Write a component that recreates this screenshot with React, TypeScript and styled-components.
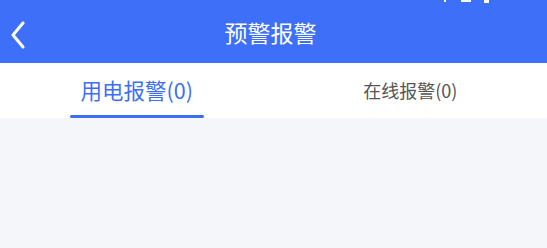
import React, { useState } from 'react';
import styled, { createGlobalStyle } from 'styled-components';

const GlobalStyle = createGlobalStyle`
  html, body {
    margin: 0;
    padding: 0;
    background: #f5f6fa;
    font-family: "Noto Sans CJK SC", "Noto Sans", sans-serif;
  }
`;

const tabs = ['用电报警(0)', '在线报警(0)'];

const App = () => {
  const [active, setActive] = useState(0);

  return (
    <Page>
      <GlobalStyle />
      <Header>
        <StatusIcons width="60" height="4" viewBox="0 0 60 4">
          <rect x="1" y="0" width="2" height="2" fill="#fff" />
          <rect x="18" y="0" width="10" height="2" fill="#fff" />
          <rect x="41" y="0" width="5" height="3" fill="#fff" />
        </StatusIcons>
        <BackButton>
          <svg width="16" height="28" viewBox="0 0 16 28">
            <path d="M13 2 L3 14 L13 26" fill="none" stroke="#fff" strokeWidth="3" strokeLinecap="round" strokeLinejoin="round" />
          </svg>
        </BackButton>
        <Title>预警报警</Title>
      </Header>
      <TabBar>
        {tabs.map((t, i) => (
          <Tab key={t} $active={i === active} onClick={() => setActive(i)}>
            {t}
          </Tab>
        ))}
      </TabBar>
      <Body />
    </Page>
  );
};

const Page = styled.div`
  width: 547px;
  height: 248px;
  display: flex;
  flex-direction: column;
  background: #f5f6fa;
  overflow: hidden;
`;

const Header = styled.div`
  position: relative;
  height: 63px;
  flex-shrink: 0;
  background: #3d6ff9;
  display: flex;
  align-items: center;
  justify-content: center;
`;

const StatusIcons = styled.svg`
  position: absolute;
  top: 0;
  right: 44px;
`;

const BackButton = styled.div`
  position: absolute;
  left: 10px;
  top: 21px;
  display: flex;
`;

const Title = styled.div`
  color: #fff;
  font-size: 23px;
  line-height: 30px;
  margin-right: 6px;
`;

const TabBar = styled.div`
  height: 55px;
  flex-shrink: 0;
  background: #fff;
  display: flex;
`;

const Tab = styled.div<{ $active: boolean }>`
  flex: 1;
  position: relative;
  display: flex;
  align-items: center;
  justify-content: center;
  padding-bottom: 2px;
  font-size: ${(p) => (p.$active ? '21.5px' : '18px')};
  color: ${(p) => (p.$active ? '#3d6ff6' : '#555')};
  cursor: pointer;

  &::after {
    content: '';
    display: ${(p) => (p.$active ? 'block' : 'none')};
    position: absolute;
    bottom: 0;
    left: 50%;
    width: 134px;
    height: 3px;
    margin-left: -67px;
    background: #3d6ff6;
    border-radius: 2px;
  }
`;

const Body = styled.div`
  flex: 1;
  background: #f5f6fa;
`;

export default App;
